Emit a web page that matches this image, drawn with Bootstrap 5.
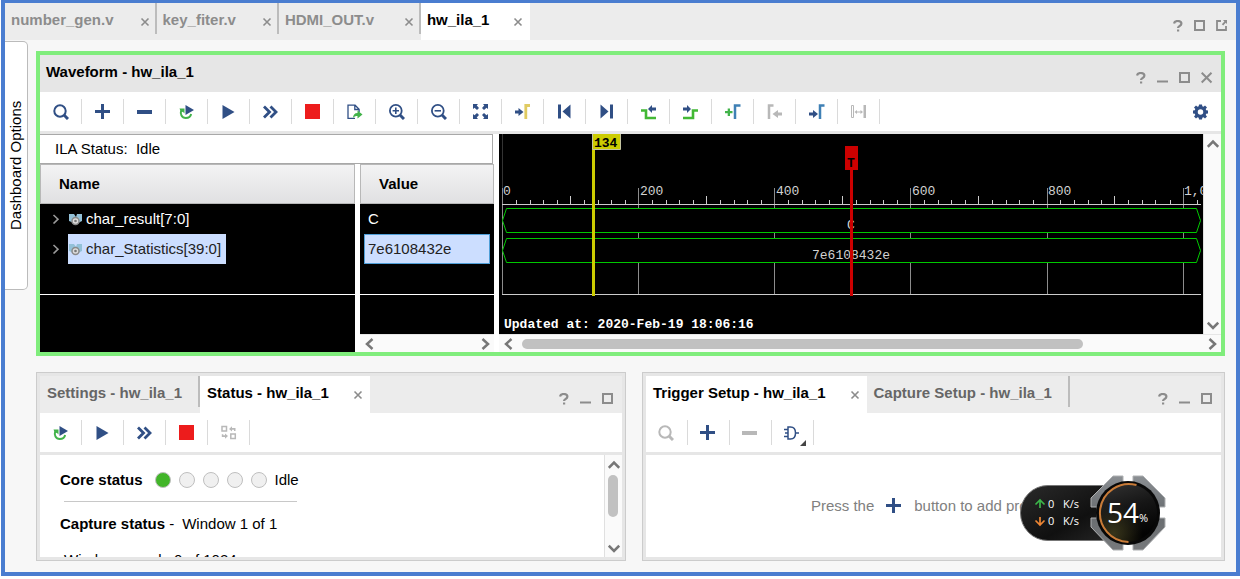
<!DOCTYPE html>
<html lang="en">
<head>
<meta charset="utf-8">
<meta name="viewport" content="width=device-width, initial-scale=1">
<title>hw_ila_1 dashboard</title>
<link href="https://cdn.jsdelivr.net/npm/bootstrap@5.3.0/dist/css/bootstrap.min.css" rel="stylesheet">
<style>
  :root { --navy: #304f85; --mute: #8c8c8c; --chrome: #e6e6e6; }
  body { font-family: "Liberation Sans", Arial, sans-serif; font-size: 15px; line-height: 22px; color: #000; background: #fff; }
  svg { display: block; flex: none; }
  button { border: 0; background: none; padding: 0; color: inherit; }
  .app-frame { min-height: calc(100vh - 3px); margin-left: 1px; border: 4px solid #4a7dd0; border-top-width: 3px; background: #f7f7f7; }

  /* tab strips */
  .tab-strip { height: 37px; background: #ececec; }
  .tab-item { height: 31px; padding: 2px 5px 0 6px; gap: 26px; font-weight: bold; color: var(--mute); white-space: nowrap; border-right: 2px solid #bcbcbc; }
  .tab-item.roomy { min-width: 142px; }
  .tab-item.is-active { height: 37px; padding: 2px 7px 6px 6px; gap: 24px; color: #000; background: #fff; border-right: 0; }
  .tab-item .tab-close { color: var(--mute); margin-top: 4px; }
  .dock .tab-item { color: #666; padding-left: 7px; padding-right: 16px; }
  .dock .tab-item.is-active { color: #000; padding-right: 7px; }
  .win-ctl { padding: 17px 3px 0 0; color: var(--mute); }
  .win-ctl button { width: 22px; padding: 0 5px; }

  /* side tab and panels */
  .side-tab { width: 23px; height: 249px; margin-top: 1px; background: #fff; border: 1px solid #bbb; border-right: 0; border-radius: 5px 0 0 5px; writing-mode: vertical-rl; transform: rotate(180deg); }
  .workspace { padding: 11px 11px 11px 8px; gap: 16px; min-width: 0; }
  .wave-panel { border: 4px solid #80ed7c; background: #fff; }
  .panel-title { height: 37px; background: var(--chrome); }
  .panel-title h1 { font-size: 15px; line-height: 22px; font-weight: bold; margin: 0; padding: 6px 0 0 6px; }
  .tool-row { height: 39px; background: #fff; }
  .tool-row .tool { width: 42px; height: 25px; border-right: 1px solid #dadada; color: var(--navy); position: relative; }
  .tool-row .tool:disabled { color: #b8b8b8; }
  .gear { color: var(--navy); margin-right: 12px; }
  .tool-rule { border-bottom: 3px solid var(--chrome); }
  .corner { position: absolute; right: 7px; bottom: -1px; color: #444; }

  /* signal lists */
  .signals { width: 454px; }
  .wave-side { min-width: 0; }
  .ila-state { height: 30px; margin-right: 1px; padding-left: 15px; border: 1px solid #a8a8a8; border-left: 0; }
  .sig-cols { gap: 5px; }
  .name-col { background: #000; min-width: 0; }
  .value-col { width: 134px; background: #000; }
  .sig-table { width: 100%; border-collapse: separate; border-spacing: 0; color: #fff; }
  .sig-table th { height: 40px; padding: 0 18px; color: #000; border: 1px solid #b8b8b8; background: linear-gradient(#f3f3f4, #e0e0e2); }
  .sig-table td { height: 30px; padding: 0; }
  .sig-table .spare td { border-bottom: 1px solid #fff; height: 31px; }
  .twist { width: 28px; padding-left: 12px; color: #999; }
  .sig { height: 30px; gap: 4px; padding: 0 5px 0 1px; }
  .is-picked { background: #ccdeff; color: #222; }
  .val { height: 30px; margin: 0 4px; padding: 0 3px; border: 1px solid transparent; }
  .val.is-picked { border-color: #4f9fd8; }

  /* scroll bars */
  .bar-h { height: 18px; background: #fafafa; color: #777; padding: 0 3px; border-top: 1px solid #e6e6e6; }
  .bar-v { width: 18px; background: #fafafa; color: #777; padding: 4px 0 3px 3px; border-left: 1px solid #e0e0e0; }
  .thumb { background: #c1c1c1; border-radius: 5px; }
  .bar-h .thumb { height: 10px; }
  .bar-v .thumb { width: 10px; height: 42px; }

  .wave { background: #000; font-family: "Liberation Mono", monospace; font-size: 13px; }
  .wave svg { width: 100%; height: 200px; }

  /* lower docks */
  .dock { border: 1px solid #ccc; background: var(--chrome); padding: 3px; flex: 583 1 0; }
  .dock-core { flex-grow: 590; }
  .dock-body { background: #fff; height: 102px; }
  .status-body { padding: 14px 0 0 20px; }
  .status-body .sample-row { margin: 14px 0 0 4px; }
  .lamp { width: 16px; height: 16px; border-radius: 50%; border: 1px solid #bfbfbf; background: #f0f0f0; }
  .lamp.is-on { background: #42b529; }
  .rule { width: 233px; height: 1px; background: #c8c8c8; margin: 10px 0 11px 4px; }
  .hint { color: #808080; }

  .net-meter { position: absolute; right: 69px; bottom: 21px; font-family: "Open Sans", sans-serif; }
</style>
</head>
<body>

<svg width="0" height="0" class="position-absolute" aria-hidden="true">
  <symbol id="i-close" viewBox="0 0 10 10"><path d="M1.500 1.500l7 7M8.500 1.500l-7 7" stroke="currentColor" stroke-width="1.600"/></symbol>
  <symbol id="i-help" viewBox="0 0 12 12"><path d="M2 3.500C2.300 1.800 3.700 1 5.700 1c2.300 0 3.700 1 3.700 2.700 0 2.400-3.400 2.100-3.400 4.300" fill="none" stroke="currentColor" stroke-width="2.200"/><path d="M5 9.500h2.200v2H5z" fill="currentColor"/></symbol>
  <symbol id="i-min" viewBox="0 0 12 12"><path d="M0 8.500h11v2H0z" fill="currentColor"/></symbol>
  <symbol id="i-max" viewBox="0 0 12 12"><path d="M1 1h9v9H1z" fill="none" stroke="currentColor" stroke-width="2"/></symbol>
  <symbol id="i-pop" viewBox="0 0 12 12"><path d="M5 1H1v9h9V6" fill="none" stroke="currentColor" stroke-width="1.800"/><path d="M7 0h4v4L9.700 2.800 7.200 5.600 5.800 4.300 8.400 1.500z" fill="currentColor"/></symbol>
  <symbol id="i-x" viewBox="0 0 12 12"><path d="M.7.7l9.800 9.800M10.500.7L.7 10.500" stroke="currentColor" stroke-width="2"/></symbol>
  <symbol id="i-search" viewBox="0 0 16 16"><circle cx="7" cy="7" r="5.700" fill="none" stroke="currentColor" stroke-width="2"/><path d="M11 11l4 4" stroke="currentColor" stroke-width="3"/></symbol>
  <symbol id="i-plus" viewBox="0 0 16 16"><path d="M6 0h3v6h6v3H9v6H6V9H0V6h6z" fill="currentColor"/></symbol>
  <symbol id="i-minus" viewBox="0 0 16 16"><path d="M0 6h15v4H0z" fill="currentColor"/></symbol>
  <symbol id="i-rerun" viewBox="0 0 16 16"><path d="M2.200 6.500C.9 10 2.700 14 6.700 14c3 0 5-1.700 5.400-4" fill="none" stroke="#42b34a" stroke-width="2"/><path d="M.5 4.500h5v5L4 8 1.700 7.500z" fill="#42b34a"/><path d="M6.500 1l8.500 5-8.500 5z" fill="currentColor"/></symbol>
  <symbol id="i-play" viewBox="0 0 16 16"><path d="M1.500 1l12 7-12 7z" fill="currentColor"/></symbol>
  <symbol id="i-fast" viewBox="0 0 16 16"><path d="M1 2.500L6.500 8 1 13.500M7.500 2.500L13 8l-5.500 5.500" fill="none" stroke="currentColor" stroke-width="2.800"/></symbol>
  <symbol id="i-stop" viewBox="0 0 16 16"><path d="M0 0h15v15H0z" fill="#ed1c1c"/></symbol>
  <symbol id="i-export" viewBox="0 0 16 16"><path d="M8 14.300H1V1.200h7.100l4 4V8M7.800 1.500v4h4" fill="none" stroke="currentColor" stroke-width="1.300"/><path d="M10.500 6.500l5 4-5 4V12c-2 0-3.500.5-4.500 2 0-3 1.500-5 4.500-5z" fill="#42b34a"/></symbol>
  <symbol id="i-zin" viewBox="0 0 16 16"><circle cx="6.800" cy="6.800" r="5.900" fill="none" stroke="currentColor" stroke-width="1.800"/><path d="M3.600 6.800h6.400M6.800 3.600v6.400" stroke="currentColor" stroke-width="1.600"/><path d="M11 11l4 4" stroke="currentColor" stroke-width="3"/></symbol>
  <symbol id="i-zout" viewBox="0 0 16 16"><circle cx="6.800" cy="6.800" r="5.900" fill="none" stroke="currentColor" stroke-width="1.800"/><path d="M3.600 6.800h6.400" stroke="currentColor" stroke-width="1.600"/><path d="M11 11l4 4" stroke="currentColor" stroke-width="3"/></symbol>
  <symbol id="i-fit" viewBox="0 0 16 16"><path d="M0 0h5L3.700 1.500 6 4 4 6 1.500 3.700 0 5zM15 0v5l-1.500-1.300L11 6 9 4l2.300-2.500L10 0zM0 15v-5l1.500 1.300L4 9l2 2-2.300 2.500L5 15zM15 15h-5l1.300-1.500L9 11l2-2 2.500 2.300L15 10z" fill="currentColor"/></symbol>
  <symbol id="i-edge" viewBox="0 0 16 16"><path d="M15 1.500h-4.200V15" fill="none" stroke="#e0cb62" stroke-width="2.800"/><path d="M0 6.500h3.500V4L8.500 8l-5 4V9.500H0z" fill="currentColor"/></symbol>
  <symbol id="i-first" viewBox="0 0 16 16"><path d="M1 .5h3v14H1zM13.500.5v14L5.500 7.500z" fill="currentColor"/></symbol>
  <symbol id="i-last" viewBox="0 0 16 16"><path d="M11 .5h3v14h-3zM1.500.5v14l8-7z" fill="currentColor"/></symbol>
  <symbol id="i-prev" viewBox="0 0 16 16"><path d="M0 6.500h5V14h10" fill="none" stroke="#42b834" stroke-width="2.600"/><path d="M15 3.500h-4V1L7 5l4 4V6.500h4z" fill="currentColor"/></symbol>
  <symbol id="i-next" viewBox="0 0 16 16"><path d="M0 14h10V6.500h5" fill="none" stroke="#42b834" stroke-width="2.600"/><path d="M0 3.500h4V1l4 4-4 4V6.500H0z" fill="currentColor"/></symbol>
  <symbol id="i-addm" viewBox="0 0 16 16"><path d="M15.500 1.500H10V15" fill="none" stroke="#3f80b5" stroke-width="2.500"/><path d="M2.700 4.500H5V7h2.500v2.300H5V12H2.700V9.300H0V7h2.700z" fill="#42b34a"/></symbol>
  <symbol id="i-pm" viewBox="0 0 16 16"><path d="M6.500 1.500H2V15" fill="none" stroke="currentColor" stroke-width="2.500"/><path d="M15 8.500h-4V6l-5.500 4 5.500 4v-2.500h4z" fill="currentColor"/></symbol>
  <symbol id="i-nm" viewBox="0 0 16 16"><path d="M15.500 1.500H11V15" fill="none" stroke="#3f80b5" stroke-width="2.500"/><path d="M0 8.500h4V6l5 4-5 4v-2.500H0z" fill="currentColor"/></symbol>
  <symbol id="i-span" viewBox="0 0 16 16"><path d="M.5 1.500h2v12h-2z" fill="none" stroke="currentColor"/><path d="M12.500 1H15v13h-2.500zM3.500 8L6 6v1.500h3.500V6L12 8l-2.500 2V8.500H6V10z" fill="currentColor"/></symbol>
  <symbol id="i-gear" viewBox="0 0 16 16"><path fill="currentColor" fill-rule="evenodd" d="M6 .5h3l.3 1.800 1.200.5L12 1.500 14 3.500 12.700 5l.5 1.300 1.800.2v3l-1.800.3-.5 1.200 1.300 1.500-2 2-1.500-1.300-1.200.5L9 15.500H6l-.3-1.800-1.200-.5L3 14.500l-2-2L2.300 11l-.5-1.200L0 9.500v-3l1.800-.2L2.300 5 1 3.500l2-2 1.500 1.300 1.200-.5zM7.500 5.200a2.700 2.700 0 100 5.500 2.700 2.700 0 000-5.500z"/></symbol>
  <symbol id="i-swap" viewBox="0 0 16 16"><path d="M1 1.500h4.500V6H1zM9.800 9h4.500v4.500H9.800z" fill="none" stroke="currentColor" stroke-width="1.500"/><path d="M8 4l3-2.700V3h3.500v3H13V4.800h-2v1.700zM7 11l-3 2.700V12H.8V9.300h1.500v1H4V8.500z" fill="currentColor"/></symbol>
  <symbol id="i-gate" viewBox="0 0 16 16"><path d="M4 2h2.500C10 2 11.500 5 11.500 8S10 14 6.500 14H4zM0 4.500h4M0 11.500h4M1 8h3M11.500 8H15" fill="none" stroke="currentColor" stroke-width="1.500"/></symbol>
  <symbol id="i-right" viewBox="0 0 12 12"><path d="M3.500 1L9 6l-5.500 5" fill="none" stroke="currentColor" stroke-width="2.500"/></symbol>
  <symbol id="i-left" viewBox="0 0 12 12"><path d="M9.500 1L4 6l5.500 5" fill="none" stroke="currentColor" stroke-width="2.500"/></symbol>
  <symbol id="i-up" viewBox="0 0 12 12"><path d="M.8 8.800L6 3.500l5.200 5.300" fill="none" stroke="currentColor" stroke-width="2.500"/></symbol>
  <symbol id="i-down" viewBox="0 0 12 12"><path d="M.8 3.700L6 9l5.200-5.300" fill="none" stroke="currentColor" stroke-width="2.500"/></symbol>
  <symbol id="i-twist" viewBox="0 0 8 10"><path d="M1.500 1l4.500 4.200L1.500 9.500" fill="none" stroke="currentColor" stroke-width="1.600"/></symbol>
  <symbol id="i-bus" viewBox="0 0 13 13"><path d="M0 1h5l2 3-2 6-5-2zM8 1h5v7l-4 2-2-6z" fill="#93c1d8"/><circle cx="6.500" cy="8" r="3.500" fill="#ddd" stroke="#8a8a8a" stroke-width="1.500"/><circle cx="6.500" cy="8" r="1.300" fill="#777"/></symbol>
</svg>

<div class="app-frame d-flex flex-column position-relative">
  <header class="tab-strip d-flex justify-content-between">
    <nav class="d-flex" aria-label="Open files">
      <div class="tab-item d-flex align-items-center"><button class="fw-bold">number_gen.v</button><button class="tab-close" aria-label="Close number_gen.v"><svg width="10" height="10"><use href="#i-close"/></svg></button></div>
      <div class="tab-item d-flex align-items-center"><button class="fw-bold">key_fiter.v</button><button class="tab-close" aria-label="Close key_fiter.v"><svg width="10" height="10"><use href="#i-close"/></svg></button></div>
      <div class="tab-item roomy d-flex align-items-center justify-content-between"><button class="fw-bold">HDMI_OUT.v</button><button class="tab-close" aria-label="Close HDMI_OUT.v"><svg width="10" height="10"><use href="#i-close"/></svg></button></div>
      <div class="tab-item is-active d-flex align-items-center"><button class="fw-bold">hw_ila_1</button><button class="tab-close" aria-label="Close hw_ila_1"><svg width="10" height="10"><use href="#i-close"/></svg></button></div>
    </nav>
    <div class="win-ctl d-flex align-items-start">
      <button aria-label="Help"><svg width="12" height="12"><use href="#i-help"/></svg></button>
      <button aria-label="Maximize"><svg width="12" height="12"><use href="#i-max"/></svg></button>
      <button aria-label="Float"><svg width="12" height="12"><use href="#i-pop"/></svg></button>
    </div>
  </header>

  <div class="d-flex flex-fill">
    <button class="side-tab flex-shrink-0 text-center">Dashboard Options</button>

    <main class="workspace d-flex flex-column flex-fill">
      <section class="wave-panel">
        <div class="panel-title d-flex justify-content-between">
          <h1>Waveform - hw_ila_1</h1>
          <div class="win-ctl d-flex align-items-start">
            <button aria-label="Help"><svg width="12" height="12"><use href="#i-help"/></svg></button>
            <button aria-label="Minimize"><svg width="12" height="12"><use href="#i-min"/></svg></button>
            <button aria-label="Maximize"><svg width="12" height="12"><use href="#i-max"/></svg></button>
            <button aria-label="Close"><svg width="12" height="12"><use href="#i-x"/></svg></button>
          </div>
        </div>
        <div class="tool-rule">
          <div class="tool-row d-flex align-items-center">
            <button class="tool d-flex align-items-center justify-content-center" aria-label="Search"><svg width="16" height="16"><use href="#i-search"/></svg></button>
            <button class="tool d-flex align-items-center justify-content-center" aria-label="Add probes"><svg width="16" height="16"><use href="#i-plus"/></svg></button>
            <button class="tool d-flex align-items-center justify-content-center" aria-label="Remove"><svg width="16" height="16"><use href="#i-minus"/></svg></button>
            <button class="tool d-flex align-items-center justify-content-center" aria-label="Auto re-trigger"><svg width="16" height="16"><use href="#i-rerun"/></svg></button>
            <button class="tool d-flex align-items-center justify-content-center" aria-label="Run trigger"><svg width="16" height="16"><use href="#i-play"/></svg></button>
            <button class="tool d-flex align-items-center justify-content-center" aria-label="Run immediate"><svg width="16" height="16"><use href="#i-fast"/></svg></button>
            <button class="tool d-flex align-items-center justify-content-center" aria-label="Stop"><svg width="16" height="16"><use href="#i-stop"/></svg></button>
            <button class="tool d-flex align-items-center justify-content-center" aria-label="Export data"><svg width="16" height="16"><use href="#i-export"/></svg></button>
            <button class="tool d-flex align-items-center justify-content-center" aria-label="Zoom in"><svg width="16" height="16"><use href="#i-zin"/></svg></button>
            <button class="tool d-flex align-items-center justify-content-center" aria-label="Zoom out"><svg width="16" height="16"><use href="#i-zout"/></svg></button>
            <button class="tool d-flex align-items-center justify-content-center" aria-label="Zoom fit"><svg width="16" height="16"><use href="#i-fit"/></svg></button>
            <button class="tool d-flex align-items-center justify-content-center" aria-label="Go to cursor"><svg width="16" height="16"><use href="#i-edge"/></svg></button>
            <button class="tool d-flex align-items-center justify-content-center" aria-label="Go to start"><svg width="16" height="16"><use href="#i-first"/></svg></button>
            <button class="tool d-flex align-items-center justify-content-center" aria-label="Go to end"><svg width="16" height="16"><use href="#i-last"/></svg></button>
            <button class="tool d-flex align-items-center justify-content-center" aria-label="Previous transition"><svg width="16" height="16"><use href="#i-prev"/></svg></button>
            <button class="tool d-flex align-items-center justify-content-center" aria-label="Next transition"><svg width="16" height="16"><use href="#i-next"/></svg></button>
            <button class="tool d-flex align-items-center justify-content-center" aria-label="Add marker"><svg width="16" height="16"><use href="#i-addm"/></svg></button>
            <button class="tool d-flex align-items-center justify-content-center" aria-label="Previous marker" disabled><svg width="16" height="16"><use href="#i-pm"/></svg></button>
            <button class="tool d-flex align-items-center justify-content-center" aria-label="Next marker"><svg width="16" height="16"><use href="#i-nm"/></svg></button>
            <button class="tool d-flex align-items-center justify-content-center" aria-label="Swap cursors" disabled><svg width="16" height="16"><use href="#i-span"/></svg></button>
            <button class="gear ms-auto" aria-label="Settings"><svg width="16" height="16"><use href="#i-gear"/></svg></button>
          </div>
        </div>

        <div class="d-flex sig-cols">
          <div class="signals flex-shrink-0 d-flex flex-column">
            <div class="ila-state d-flex align-items-center">ILA Status:&nbsp; Idle</div>
            <div class="d-flex sig-cols flex-fill">
              <div class="name-col flex-fill">
                <table class="sig-table">
                  <thead><tr><th scope="col">Name</th></tr></thead>
                  <tbody>
                    <tr><td><div class="d-flex align-items-center"><button class="twist" aria-label="Expand char_result"><svg width="8" height="10"><use href="#i-twist"/></svg></button><span class="sig d-flex align-items-center"><svg width="13" height="13"><use href="#i-bus"/></svg>char_result[7:0]</span></div></td></tr>
                    <tr><td><div class="d-flex align-items-center"><button class="twist" aria-label="Expand char_Statistics"><svg width="8" height="10"><use href="#i-twist"/></svg></button><span class="sig is-picked d-flex align-items-center"><svg width="13" height="13"><use href="#i-bus"/></svg>char_Statistics[39:0]</span></div></td></tr>
                    <tr class="spare"><td></td></tr>
                  </tbody>
                </table>
              </div>
              <div class="value-col flex-shrink-0 d-flex flex-column justify-content-between">
                <table class="sig-table">
                  <thead><tr><th scope="col">Value</th></tr></thead>
                  <tbody>
                    <tr><td><div class="val d-flex align-items-center">C</div></td></tr>
                    <tr><td><div class="val is-picked d-flex align-items-center">7e6108432e</div></td></tr>
                    <tr class="spare"><td></td></tr>
                  </tbody>
                </table>
                <div class="bar-h d-flex align-items-center justify-content-between">
                  <svg width="12" height="12"><use href="#i-left"/></svg>
                  <svg width="12" height="12"><use href="#i-right"/></svg>
                </div>
              </div>
            </div>
          </div>

          <div class="wave-side flex-fill d-flex flex-column">
            <div class="d-flex">
              <div class="wave flex-fill overflow-hidden">
                <svg viewBox="0 0 704 200" preserveAspectRatio="xMinYMin slice" role="img" aria-label="Captured waveform">
                  <path d="M3.500 0v54" stroke="#333"/>
                  <path d="M3.500 54v106M139.500 54v106M275.500 54v106M411.500 54v106M548.500 54v106M684.500 54v106" stroke="#8c8c8c"/>
                  <path d="M71.500 62v8M207.500 62v8M343.500 62v8M479.500 62v8M615.500 62v8M17.500 66v4M31.500 66v4M44.500 66v4M58.500 66v4M85.500 66v4M99.500 66v4M112.500 66v4M126.500 66v4M153.500 66v4M167.500 66v4M180.500 66v4M194.500 66v4M221.500 66v4M235.500 66v4M248.500 66v4M262.500 66v4M289.500 66v4M303.500 66v4M316.500 66v4M330.500 66v4M357.500 66v4M371.500 66v4M384.500 66v4M398.500 66v4M425.500 66v4M439.500 66v4M452.500 66v4M466.500 66v4M493.500 66v4M507.500 66v4M520.500 66v4M534.500 66v4M561.500 66v4M575.500 66v4M589.500 66v4M602.500 66v4M629.500 66v4M643.500 66v4M656.500 66v4M671.500 66v4M698.500 66v4M3 70.500h699M3 160.500h699" stroke="#ccc"/>
                  <path d="M7.500 74.500h690l4 12-4 12H7.500l-4-12zM7.500 104.500h690l4 12-4 12H7.500l-4-12z" fill="#000" stroke="#00c800"/>
                  <g fill="#d2d2d2">
                    <text x="4" y="61">0</text><text x="141" y="61">200</text><text x="277" y="61">400</text><text x="413" y="61">600</text><text x="549" y="61">800</text><text x="685" y="61">1,0</text>
                    <text x="352" y="95" text-anchor="middle">C</text>
                    <text x="352" y="125" text-anchor="middle">7e6108432e</text>
                  </g>
                  <path d="M93 0h3v162h-3z" fill="#cccc00"/>
                  <path d="M93.500 -.5h28v16h-28z" fill="#cccc00" stroke="#c4c4a0"/>
                  <text x="95" y="13" font-weight="bold">134</text>
                  <path d="M346 12h13v24h-5v126h-3V36h-5z" fill="#cc0000"/>
                  <text x="352" y="33" text-anchor="middle" font-weight="bold">T</text>
                  <text x="5" y="194" fill="#fff" font-weight="bold">Updated at: 2020-Feb-19 18:06:16</text>
                </svg>
              </div>
              <div class="bar-v flex-shrink-0 d-flex flex-column justify-content-between">
                <svg width="12" height="12"><use href="#i-up"/></svg>
                <svg width="12" height="12"><use href="#i-down"/></svg>
              </div>
            </div>
            <div class="bar-h d-flex align-items-center gap-2">
              <svg width="12" height="12"><use href="#i-left"/></svg>
              <div class="flex-fill"><div class="thumb" style="width:83%"></div></div>
              <svg width="12" height="12"><use href="#i-right"/></svg>
            </div>
          </div>
        </div>
      </section>

      <div class="d-flex gap-3">
        <section class="dock dock-core">
          <div class="tab-strip d-flex justify-content-between">
            <nav class="d-flex" aria-label="Core views">
              <div class="tab-item d-flex align-items-center"><button class="fw-bold">Settings - hw_ila_1</button></div>
              <div class="tab-item is-active d-flex align-items-center"><button class="fw-bold">Status - hw_ila_1</button><button class="tab-close" aria-label="Close Status"><svg width="10" height="10"><use href="#i-close"/></svg></button></div>
            </nav>
            <div class="win-ctl d-flex align-items-start">
              <button aria-label="Help"><svg width="12" height="12"><use href="#i-help"/></svg></button>
              <button aria-label="Minimize"><svg width="12" height="12"><use href="#i-min"/></svg></button>
              <button aria-label="Maximize"><svg width="12" height="12"><use href="#i-max"/></svg></button>
            </div>
          </div>
          <div class="tool-rule">
            <div class="tool-row d-flex align-items-center">
              <button class="tool d-flex align-items-center justify-content-center" aria-label="Auto re-trigger"><svg width="16" height="16"><use href="#i-rerun"/></svg></button>
              <button class="tool d-flex align-items-center justify-content-center" aria-label="Run trigger"><svg width="16" height="16"><use href="#i-play"/></svg></button>
              <button class="tool d-flex align-items-center justify-content-center" aria-label="Run immediate"><svg width="16" height="16"><use href="#i-fast"/></svg></button>
              <button class="tool d-flex align-items-center justify-content-center" aria-label="Stop"><svg width="16" height="16"><use href="#i-stop"/></svg></button>
              <button class="tool d-flex align-items-center justify-content-center" aria-label="Toggle layout" disabled><svg width="16" height="16"><use href="#i-swap"/></svg></button>
            </div>
          </div>
          <div class="dock-body d-flex overflow-hidden">
            <div class="status-body flex-fill">
              <div class="d-flex align-items-center gap-2">
                <strong class="me-1">Core status</strong>
                <span class="lamp is-on"></span><span class="lamp"></span><span class="lamp"></span><span class="lamp"></span><span class="lamp"></span>
                <span>Idle</span>
              </div>
              <div class="rule"></div>
              <div class="d-flex"><span><strong>Capture status</strong> -</span><span class="ms-2">Window 1 of 1</span></div>
              <div class="sample-row">Window sample 0 of 1024</div>
            </div>
            <div class="bar-v flex-shrink-0 d-flex flex-column gap-1">
              <svg width="12" height="12"><use href="#i-up"/></svg>
              <div class="thumb"></div>
              <svg width="12" height="12" class="mt-auto"><use href="#i-down"/></svg>
            </div>
          </div>
        </section>

        <section class="dock">
          <div class="tab-strip d-flex justify-content-between">
            <nav class="d-flex" aria-label="Setup views">
              <div class="tab-item is-active d-flex align-items-center"><button class="fw-bold">Trigger Setup - hw_ila_1</button><button class="tab-close" aria-label="Close Trigger Setup"><svg width="10" height="10"><use href="#i-close"/></svg></button></div>
              <div class="tab-item d-flex align-items-center"><button class="fw-bold">Capture Setup - hw_ila_1</button></div>
            </nav>
            <div class="win-ctl d-flex align-items-start">
              <button aria-label="Help"><svg width="12" height="12"><use href="#i-help"/></svg></button>
              <button aria-label="Minimize"><svg width="12" height="12"><use href="#i-min"/></svg></button>
              <button aria-label="Maximize"><svg width="12" height="12"><use href="#i-max"/></svg></button>
            </div>
          </div>
          <div class="tool-rule">
            <div class="tool-row d-flex align-items-center">
              <button class="tool d-flex align-items-center justify-content-center" aria-label="Search" disabled><svg width="16" height="16"><use href="#i-search"/></svg></button>
              <button class="tool d-flex align-items-center justify-content-center" aria-label="Add probes"><svg width="16" height="16"><use href="#i-plus"/></svg></button>
              <button class="tool d-flex align-items-center justify-content-center" aria-label="Remove" disabled><svg width="16" height="16"><use href="#i-minus"/></svg></button>
              <button class="tool d-flex align-items-center justify-content-center" aria-label="Trigger condition"><svg width="16" height="16"><use href="#i-gate"/></svg><svg class="corner" width="6" height="6" viewBox="0 0 6 6"><path d="M6 0v6H0z" fill="currentColor"/></svg></button>
            </div>
          </div>
          <div class="dock-body hint d-flex align-items-center justify-content-center">
            <span>Press the</span>
            <svg class="mx-2 px-1" width="24" height="16" viewBox="0 0 16 16" color="#304f85"><use href="#i-plus"/></svg>
            <span>button to add probes.</span>
          </div>
        </section>
      </div>
    </main>
  </div>

  <div class="net-meter">
    <svg width="147" height="76" viewBox="0 0 147 76" role="img" aria-label="Network and memory meter">
      <defs>
        <linearGradient id="pill" x1="0" y1="0" x2="1" y2="1"><stop offset="0" stop-color="#2a2a2a"/><stop offset=".6" stop-color="#101010"/><stop offset="1" stop-color="#282828"/></linearGradient>
        <linearGradient id="steel" x1="0" y1="0" x2="0" y2="1"><stop offset="0" stop-color="#8b8f93"/><stop offset=".5" stop-color="#686c70"/><stop offset="1" stop-color="#77797b"/></linearGradient>
        <linearGradient id="dial" x1="0" y1="0" x2=".3" y2="1"><stop offset="0" stop-color="#333"/><stop offset=".5" stop-color="#161616"/><stop offset="1" stop-color="#030303"/></linearGradient>
        <radialGradient id="glow" cx=".25" cy=".85" r=".5"><stop offset="0" stop-color="#38351a"/><stop offset="1" stop-color="#38351a" stop-opacity="0"/></radialGradient>
      </defs>
      <path d="M100 10.500H28a27.500 27.500 0 000 55h72z" fill="url(#pill)" stroke="#777"/>
      <path d="M93 1h10v6h10V1h10l22 22v9h-6v11h6v9l-22 23h-10v-6h-10v6H93L71 52v-9h6V32h-6v-9z" fill="url(#steel)" stroke="#aeb0b2"/>
      <circle cx="108" cy="38" r="32" fill="#080808"/>
      <circle cx="108" cy="38" r="29" fill="url(#dial)"/>
      <circle cx="108" cy="38" r="29" fill="url(#glow)"/>
      <path d="M116.500 10a29 29 0 10-8 57" fill="none" stroke="#c87b38" stroke-width="2"/>
      <path d="M20 33V25M15.500 29.500L20 25l4.500 4.500" fill="none" stroke="#3cb54a" stroke-width="1.700"/>
      <path d="M20 42v8M15.500 45.500L20 50l4.500-4.500" fill="none" stroke="#ee8634" stroke-width="1.700"/>
      <g fill="#fff" font-size="11"><text x="28" y="33">0</text><text x="43" y="33">K/s</text><text x="28" y="50">0</text><text x="43" y="50">K/s</text></g>
      <text x="87" y="48" fill="#fff" font-size="28">54</text>
      <text x="119" y="47" fill="#fff" font-size="11">%</text>
    </svg>
  </div>
</div>

<script src="https://cdn.jsdelivr.net/npm/bootstrap@5.3.0/dist/js/bootstrap.bundle.min.js"></script>
</body>
</html>
